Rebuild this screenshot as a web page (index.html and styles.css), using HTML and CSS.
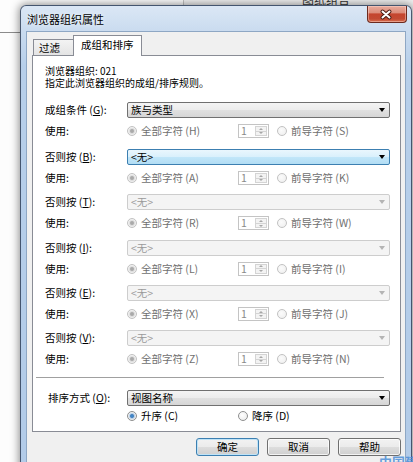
FILE: index.html
```html
<!DOCTYPE html>
<html lang="zh-CN">
<head>
<meta charset="utf-8">
<title>浏览器组织属性</title>
<link rel="stylesheet" href="styles.css">
</head>
<body>
<div class="desktop">
  <div class="bg-hline"></div>
  <div class="bg-vline"></div>
  <div class="bg-text">图纸组合</div>

  <div class="window">
    <div class="titlebar">
      <span class="title">浏览器组织属性</span>
      <div class="close">
        <svg width="40" height="17" viewBox="0 0 40 17">
          <path d="M16.5 5.5 L23.5 11.5 M23.5 5.5 L16.5 11.5" stroke="#4a1a12" stroke-width="4" stroke-linecap="round" fill="none"/>
          <path d="M16.5 5.5 L23.5 11.5 M23.5 5.5 L16.5 11.5" stroke="#ffffff" stroke-width="2" stroke-linecap="round" fill="none"/>
        </svg>
      </div>
    </div>

    <div class="client">
      <div class="tabs">
        <div class="tab">过滤</div>
        <div class="tab active">成组和排序</div>
      </div>

      <div class="panel">
        <div class="info">
          <div class="info-line">浏览器组织: 021</div>
          <div class="info-line">指定此浏览器组织的成组/排序规则。</div>
        </div>

        <div class="group g1">
          <div class="row">
            <span class="label">成组条件 (<u>G</u>):</span>
            <div class="combo"><span>族与类型</span><i class="arrow"></i></div>
          </div>
          <div class="row use">
            <span class="label">使用:</span>
            <div class="usectl">
              <span class="radio checked disabled"><i></i>全部字符 (H)</span>
              <span class="spin"><span class="spin-val">1</span><span class="spin-btns"><i class="up"></i><i class="down"></i></span></span>
              <span class="radio disabled"><i></i>前导字符 (S)</span>
            </div>
          </div>
        </div>

        <div class="group g2">
          <div class="row">
            <span class="label">否则按 (<u>B</u>):</span>
            <div class="combo focus"><span>&lt;无&gt;</span><i class="arrow"></i></div>
          </div>
          <div class="row use">
            <span class="label">使用:</span>
            <div class="usectl">
              <span class="radio checked disabled"><i></i>全部字符 (A)</span>
              <span class="spin"><span class="spin-val">1</span><span class="spin-btns"><i class="up"></i><i class="down"></i></span></span>
              <span class="radio disabled"><i></i>前导字符 (K)</span>
            </div>
          </div>
        </div>

        <div class="group">
          <div class="row">
            <span class="label">否则按 (<u>T</u>):</span>
            <div class="combo disabled"><span>&lt;无&gt;</span><i class="arrow"></i></div>
          </div>
          <div class="row use">
            <span class="label">使用:</span>
            <div class="usectl">
              <span class="radio checked disabled"><i></i>全部字符 (R)</span>
              <span class="spin"><span class="spin-val">1</span><span class="spin-btns"><i class="up"></i><i class="down"></i></span></span>
              <span class="radio disabled"><i></i>前导字符 (W)</span>
            </div>
          </div>
        </div>

        <div class="group">
          <div class="row">
            <span class="label">否则按 (<u>I</u>):</span>
            <div class="combo disabled"><span>&lt;无&gt;</span><i class="arrow"></i></div>
          </div>
          <div class="row use">
            <span class="label">使用:</span>
            <div class="usectl">
              <span class="radio checked disabled"><i></i>全部字符 (L)</span>
              <span class="spin"><span class="spin-val">1</span><span class="spin-btns"><i class="up"></i><i class="down"></i></span></span>
              <span class="radio disabled"><i></i>前导字符 (I)</span>
            </div>
          </div>
        </div>

        <div class="group">
          <div class="row">
            <span class="label">否则按 (<u>E</u>):</span>
            <div class="combo disabled"><span>&lt;无&gt;</span><i class="arrow"></i></div>
          </div>
          <div class="row use">
            <span class="label">使用:</span>
            <div class="usectl">
              <span class="radio checked disabled"><i></i>全部字符 (X)</span>
              <span class="spin"><span class="spin-val">1</span><span class="spin-btns"><i class="up"></i><i class="down"></i></span></span>
              <span class="radio disabled"><i></i>前导字符 (J)</span>
            </div>
          </div>
        </div>

        <div class="group">
          <div class="row">
            <span class="label">否则按 (<u>V</u>):</span>
            <div class="combo disabled"><span>&lt;无&gt;</span><i class="arrow"></i></div>
          </div>
          <div class="row use">
            <span class="label">使用:</span>
            <div class="usectl">
              <span class="radio checked disabled"><i></i>全部字符 (Z)</span>
              <span class="spin"><span class="spin-val">1</span><span class="spin-btns"><i class="up"></i><i class="down"></i></span></span>
              <span class="radio disabled"><i></i>前导字符 (N)</span>
            </div>
          </div>
        </div>

        <div class="separator"></div>

        <div class="row sort">
          <span class="label">排序方式 (<u>O</u>):</span>
          <div class="combo"><span>视图名称</span><i class="arrow"></i></div>
        </div>
        <div class="row sortdir">
          <span class="label"></span>
          <div class="usectl">
            <span class="radio checked"><i></i>升序 (C)</span>
            <span class="radio"><i></i>降序 (D)</span>
          </div>
        </div>
      </div>

      <div class="buttons">
        <div class="btn default">确定</div>
        <div class="btn">取消</div>
        <div class="btn">帮助</div>
      </div>
    </div>
  </div>

  <div class="watermark">中国建</div>
</div>
</body>
</html>
```

FILE: styles.css
```css
* { box-sizing: border-box; }

html, body {
  margin: 0;
  padding: 0;
}

body {
  width: 413px;
  height: 462px;
  overflow: hidden;
  background: #fbfbfb;
  font-family: "Noto Sans CJK SC", "Noto Sans", sans-serif;
  font-size: 10.5px;
  color: #000;
}

.desktop {
  position: relative;
  width: 413px;
  height: 462px;
  overflow: hidden;
  background: linear-gradient(to right, #fdfdfd 0, #fdfdfd 183px, #f1f1f1 184px);
}

.bg-hline {
  position: absolute;
  left: 0;
  top: 32px;
  width: 20px;
  height: 1px;
  background: #8c8c8c;
}

.bg-vline {
  position: absolute;
  left: 183px;
  top: 0;
  width: 1px;
  height: 6px;
  background: #c4c4c4;
}

.bg-text {
  position: absolute;
  left: 302px;
  top: -9px;
  font-size: 12px;
  color: #333;
}

.watermark {
  position: absolute;
  left: 379px;
  top: 452px;
  font-size: 13px;
  font-weight: bold;
  color: #4d8fd8;
  opacity: 0.85;
  white-space: nowrap;
}

/* ---------- window frame ---------- */
.window {
  position: absolute;
  left: 20px;
  top: 5px;
  width: 392px;
  height: 470px;
  border: 1px solid rgba(40, 55, 80, 0.8);
  border-radius: 6px 6px 0 0;
  background: linear-gradient(to bottom, #dbe7f5 0, #c9dbef 26px, #b7cfea 60px, #b2cbe8 100%);
  box-shadow: 0 0 8px 1px rgba(0, 0, 0, 0.45);
  padding: 0 5px;
  display: flex;
  flex-direction: column;
}

.titlebar {
  position: relative;
  height: 25px;
  flex: none;
  display: flex;
  align-items: center;
  padding-left: 1px;
}

.title {
  font-size: 11px;
  line-height: 14px;
  margin-top: 1px;
  color: #000;
  text-shadow: 0 0 5px rgba(255, 255, 255, 0.95);
}

.close {
  position: absolute;
  right: -1px;
  top: 0;
  width: 40px;
  height: 17px;
  border: 1px solid #6c2a1e;
  border-top: none;
  border-radius: 0 0 4px 4px;
  background: linear-gradient(to bottom, #e9ab9c 0, #dc8d7b 42%, #c5452e 50%, #c24a33 80%, #d9704f 100%);
  box-shadow: inset 0 0 0 1px rgba(255, 220, 210, 0.45);
  display: flex;
  align-items: center;
  justify-content: center;
}

.close svg {
  display: block;
  margin-left: -2px;
}

/* ---------- client area ---------- */
.client {
  flex: 1;
  border: 1px solid #8ea7c4;
  background: #f0f0f0;
  padding: 3px 4px 0 5px;
  display: flex;
  flex-direction: column;
}

.tabs {
  display: flex;
  align-items: flex-end;
  height: 21px;
  margin-bottom: -1px;
  padding-left: 1px;
  position: relative;
  z-index: 1;
}

.tab {
  height: 16px;
  width: 41px;
  margin-bottom: 1px;
  padding-left: 5px;
  padding-top: 1px;
  line-height: 14px;
  border: 1px solid #898c95;
  border-bottom: none;
  background: linear-gradient(to bottom, #f3f3f3, #e4e4e4);
}

.tab.active {
  height: 21px;
  width: 69px;
  margin-left: -1px;
  margin-bottom: 0;
  padding-left: 7px;
  padding-top: 2px;
  background: #fff;
}

.panel {
  height: 377px;
  flex: none;
  border: 1px solid #898c95;
  background: #fff;
  padding: 0 10px 0 12px;
}

.info {
  padding-top: 8.5px;
  font-size: 10px;
}

.info-line {
  height: 12px;
  line-height: 12px;
  white-space: nowrap;
}

.group { margin-top: 8.25px; }
.group.g1 { margin-top: 13.5px; }
.group.g2 { margin-top: 10px; }

.row {
  display: grid;
  grid-template-columns: 82px 1fr;
  align-items: center;
  height: 16px;
}

.row.use { margin-top: 5px; }

.label {
  line-height: 14px;
  white-space: nowrap;
}

.label u {
  text-decoration-thickness: 1px;
  text-underline-offset: 1px;
}

.row.sort { margin-top: 11px; }
.row.sort .label { padding-left: 3px; }
.row.sortdir { margin-top: 2px; }

/* ---------- combo box ---------- */
.combo {
  height: 16px;
  display: flex;
  align-items: center;
  justify-content: space-between;
  padding: 0 4px 0 3px;
  border: 1px solid #707070;
  border-radius: 2px;
  background: linear-gradient(to bottom, #f4f4f4 0, #ececec 50%, #e0e0e0 51%, #d6d6d6 100%);
  line-height: 14px;
}

.combo.focus {
  border-color: #3c7fb1;
  background: linear-gradient(to bottom, #eaf6fd 0, #d9f0fc 50%, #c2e6f9 51%, #b2ddf4 100%);
}

.combo.disabled {
  border-color: #cdcdcd;
  background: #f4f4f4;
  color: #9a9a9a;
}

.arrow {
  width: 0;
  height: 0;
  border-left: 3.5px solid transparent;
  border-right: 3.5px solid transparent;
  border-top: 4px solid #000;
}

.combo.disabled .arrow { border-top-color: #b4b4b4; }

/* ---------- radios ---------- */
.usectl {
  display: flex;
  align-items: center;
  height: 16px;
}

.radio {
  display: inline-flex;
  align-items: center;
  line-height: 14px;
  white-space: nowrap;
}

.usectl .radio:first-child { width: 111px; }

.radio i {
  position: relative;
  width: 10px;
  height: 10px;
  margin-right: 4px;
  border-radius: 50%;
  border: 1px solid #8e8f8f;
  background: radial-gradient(circle at 40% 40%, #ffffff 0, #e8e8e8 100%);
}

.radio.disabled { color: #707070; }

.radio.disabled i {
  border-color: #c2c2c2;
  background: radial-gradient(circle at 40% 40%, #fbfbfb 0, #ededed 100%);
}

.radio.checked i::after {
  content: "";
  position: absolute;
  left: 2px;
  top: 2px;
  width: 4px;
  height: 4px;
  border-radius: 50%;
  background: radial-gradient(circle, #4d96d6 0, #1b5aa0 100%);
  box-shadow: 0 0 1px 1px rgba(90, 150, 210, 0.45);
}

.radio.checked.disabled i::after {
  background: #a9a9a9;
  box-shadow: 0 0 1px 1px rgba(190, 190, 190, 0.5);
}

/* ---------- spinner ---------- */
.spin {
  display: flex;
  width: 31px;
  height: 14px;
  margin-right: 8px;
  border: 1px solid #c4c4c4;
  background: #fff;
}

.spin-val {
  flex: 1;
  padding-left: 2px;
  line-height: 12px;
  color: #8a8a8a;
}

.spin-btns {
  width: 14px;
  display: flex;
  flex-direction: column;
  padding: 1px;
}

.spin-btns i {
  flex: 1;
  display: flex;
  align-items: center;
  justify-content: center;
  border: 1px solid #d4d4d4;
  background: #f3f3f3;
}

.spin-btns i + i { margin-top: -1px; }

.spin-btns i::before {
  content: "";
  width: 0;
  height: 0;
  border-left: 2.5px solid transparent;
  border-right: 2.5px solid transparent;
  border-bottom: 2.5px solid #a6a6a6;
}

.spin-btns i.down::before {
  border-bottom: none;
  border-top: 2.5px solid #a6a6a6;
}

/* ---------- separator ---------- */
.separator {
  margin: 10px 6px 0 -9px;
  border-top: 1px solid #a0a0a0;
  border-bottom: 1px solid #ffffff;
}

/* ---------- buttons ---------- */
.buttons {
  display: flex;
  justify-content: flex-end;
  gap: 8px;
  margin-top: 6px;
}

.btn {
  width: 63px;
  height: 18px;
  display: flex;
  align-items: center;
  justify-content: center;
  line-height: 14px;
  border: 1px solid #707070;
  border-radius: 3px;
  background: linear-gradient(to bottom, #f2f2f2 0, #ebebeb 50%, #dddddd 51%, #cfcfcf 100%);
  box-shadow: inset 0 0 0 1px rgba(255, 255, 255, 0.75);
}

.btn.default {
  border-color: #3c7fb1;
  box-shadow: inset 0 0 0 1px #bfe3f7;
}
```
